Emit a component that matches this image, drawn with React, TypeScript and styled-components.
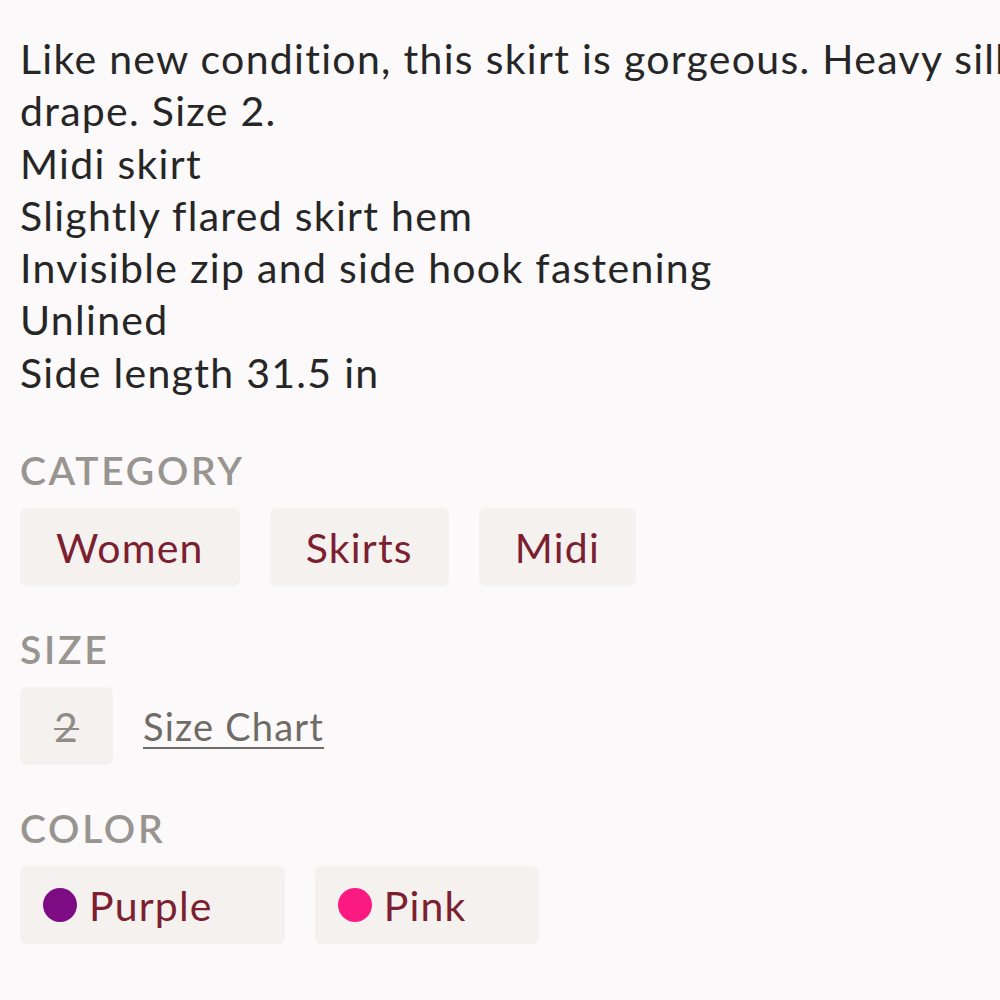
import { FunctionComponent } from "react";
import styled, { createGlobalStyle } from "styled-components";

const GlobalStyle = createGlobalStyle`
  html, body {
    margin: 0;
    padding: 0;
    background: #fbf9f9;
    overflow: hidden;
  }
  body {
    font-family: Lato, "Open Sans", sans-serif;
  }
`;

const PageRoot = styled.div`
  width: 1000px;
  height: 1000px;
  overflow: hidden;
  box-sizing: border-box;
  padding: 33px 0 0 20px;
  background: #fbf9f9;
`;
const Description = styled.div`
  font-size: 41px;
  line-height: 52.3px;
  letter-spacing: 1.3px;
  color: #262626;
  white-space: nowrap;
`;
const Section = styled.section<{ $first?: boolean }>`
  margin-top: ${(p) => (p.$first ? "47px" : "39px")};
  display: flex;
  flex-direction: column;
  gap: 14px;
`;
const SectionTitle = styled.div`
  font-size: 39px;
  line-height: 48px;
  font-weight: 600;
  color: #989490;
  letter-spacing: 2.7px;
`;
const ChipRow = styled.div`
  display: flex;
  flex-direction: row;
  align-items: center;
  gap: 30px;
`;
const Chip = styled.div<{ $muted?: boolean }>`
  display: flex;
  align-items: center;
  gap: 12px;
  height: 78px;
  box-sizing: border-box;
  padding: 0 ${(p) => (p.$muted ? "34px" : "36px")};
  border-radius: 7px;
  background: #f4f1ef;
  font-size: 41px;
  letter-spacing: 1.2px;
  color: ${(p) => (p.$muted ? "#8f8b87" : "#7b1f31")};
  text-decoration: ${(p) => (p.$muted ? "line-through" : "none")};
  text-decoration-thickness: 2px;
`;
const ColorChip = styled(Chip)`
  padding: 0 72px 0 23px;
`;
const Dot = styled.span<{ $color: string }>`
  width: 34px;
  height: 34px;
  border-radius: 50%;
  background: ${(p) => p.$color};
  flex-shrink: 0;
`;
const SizeChartLink = styled.a`
  font-size: 38px;
  letter-spacing: 1.2px;
  color: #6f6b67;
  text-decoration: underline;
  text-underline-offset: 6px;
  text-decoration-thickness: 2px;
`;

const lines = [
  "Like new condition, this skirt is gorgeous. Heavy silk with beautiful",
  "drape. Size 2.",
  "Midi skirt",
  "Slightly flared skirt hem",
  "Invisible zip and side hook fastening",
  "Unlined",
  "Side length 31.5 in",
];

const categories = ["Women", "Skirts", "Midi"];
const colors = [
  { name: "Purple", color: "#7d0c84" },
  { name: "Pink", color: "#fb1982" },
];

const App: FunctionComponent = () => {
  return (
    <>
      <GlobalStyle />
      <PageRoot>
        <Description>
          {lines.map((l) => (
            <div key={l}>{l}</div>
          ))}
        </Description>
        <Section $first>
          <SectionTitle>CATEGORY</SectionTitle>
          <ChipRow>
            {categories.map((c) => (
              <Chip key={c}>{c}</Chip>
            ))}
          </ChipRow>
        </Section>
        <Section>
          <SectionTitle>SIZE</SectionTitle>
          <ChipRow>
            <Chip $muted>2</Chip>
            <SizeChartLink>Size Chart</SizeChartLink>
          </ChipRow>
        </Section>
        <Section>
          <SectionTitle>COLOR</SectionTitle>
          <ChipRow>
            {colors.map((c) => (
              <ColorChip key={c.name}>
                <Dot $color={c.color} />
                {c.name}
              </ColorChip>
            ))}
          </ChipRow>
        </Section>
      </PageRoot>
    </>
  );
};

export default App;
